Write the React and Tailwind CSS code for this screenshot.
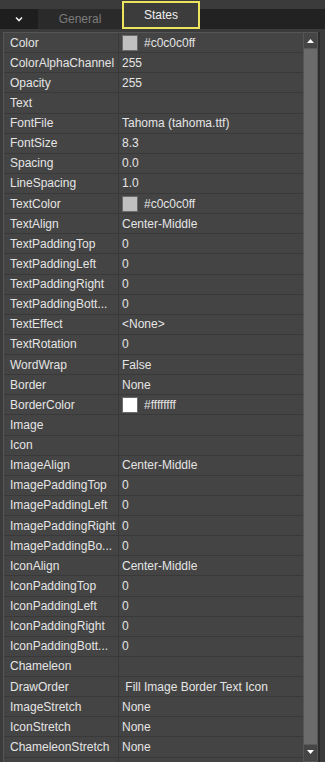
import React from 'react';

const rows = [
  ['Color', '#c0c0c0ff', '#c0c0c0'],
  ['ColorAlphaChannel', '255'],
  ['Opacity', '255'],
  ['Text', ''],
  ['FontFile', 'Tahoma (tahoma.ttf)'],
  ['FontSize', '8.3'],
  ['Spacing', '0.0'],
  ['LineSpacing', '1.0'],
  ['TextColor', '#c0c0c0ff', '#c0c0c0'],
  ['TextAlign', 'Center-Middle'],
  ['TextPaddingTop', '0'],
  ['TextPaddingLeft', '0'],
  ['TextPaddingRight', '0'],
  ['TextPaddingBott...', '0'],
  ['TextEffect', '<None>'],
  ['TextRotation', '0'],
  ['WordWrap', 'False'],
  ['Border', 'None'],
  ['BorderColor', '#ffffffff', '#ffffff'],
  ['Image', ''],
  ['Icon', ''],
  ['ImageAlign', 'Center-Middle'],
  ['ImagePaddingTop', '0'],
  ['ImagePaddingLeft', '0'],
  ['ImagePaddingRight', '0'],
  ['ImagePaddingBo...', '0'],
  ['IconAlign', 'Center-Middle'],
  ['IconPaddingTop', '0'],
  ['IconPaddingLeft', '0'],
  ['IconPaddingRight', '0'],
  ['IconPaddingBott...', '0'],
  ['Chameleon', ''],
  ['DrawOrder', ' Fill Image Border Text Icon'],
  ['ImageStretch', 'None'],
  ['IconStretch', 'None'],
  ['ChameleonStretch', 'None'],
  ['', ''],
];

function Row({ label, value, swatch }) {
  return (
    <div className="flex h-[20.13px] shrink-0 border-b border-[#393939] bg-[#444444]">
      <div className="w-[115px] shrink-0 border-r border-[#393939] pl-[6px] flex items-center overflow-hidden whitespace-nowrap">
        {label}
      </div>
      <div className="flex-1 flex items-center pl-[3px] whitespace-pre overflow-hidden">
        {swatch && (
          <span
            className="inline-block w-[16px] h-[16px] mr-[6px] border border-[#6a6a6a]"
            style={{ background: swatch }}
          />
        )}
        {value}
      </div>
    </div>
  );
}

export default function App() {
  return (
    <div
      className="w-[325px] h-[762px] overflow-hidden bg-[#3b3b3b] text-[#e4e4e4] text-[12px] leading-none"
      style={{ fontFamily: '"Liberation Sans", Arial, sans-serif' }}
    >
      {/* tab strip */}
      <div className="flex items-end h-[29px]">
        <div className="w-[38px] h-[20px] bg-[#1e1e1e] flex items-center justify-center">
          <svg width="8" height="6" viewBox="0 0 8 6">
            <path d="M1 1.5 L4 4.5 L7 1.5" stroke="#f0f0f0" strokeWidth="1.6" fill="none" />
          </svg>
        </div>
        <div className="w-[84px] h-[20px] bg-[#2a2a2a] flex items-center justify-center text-[#7c7c7c]">
          General
        </div>
        <div className="w-[78px] h-[28px] border-2 border-[#ece45c] bg-[#3c3c3c] flex items-center justify-center text-[#f0f0f0]">
          States
        </div>
        <div className="flex-1 h-[20px] bg-[#222222]" />
      </div>

      <div className="flex pt-[3px] h-[733px]">
        <div className="w-[3px] shrink-0" />
        {/* property grid */}
        <div className="w-[300px] shrink-0 flex flex-col border-l border-t border-[#555555] overflow-hidden">
          {rows.map(([l, v, s], i) => (
            <Row key={i} label={l} value={v} swatch={s} />
          ))}
        </div>
        {/* scrollbar */}
        <div className="w-[15px] shrink-0 flex flex-col border border-[#555555] bg-[#6b6b6b]">
          <div className="h-[16px] bg-[#454545] border-b border-[#5a5a5a] flex items-center justify-center">
            <svg width="7" height="4" viewBox="0 0 7 4">
              <path d="M0 4 L3.5 0 L7 4 Z" fill="#ffffff" />
            </svg>
          </div>
          <div className="flex-1" />
          <div className="h-[17px] bg-[#454545] border-t border-[#5a5a5a] flex items-start justify-center pt-[5px]">
            <svg width="7" height="4" viewBox="0 0 7 4">
              <path d="M0 0 L3.5 4 L7 0 Z" fill="#ffffff" />
            </svg>
          </div>
        </div>
        <div className="w-[2px] shrink-0 bg-[#2c2c2c]" />
      </div>
    </div>
  );
}
